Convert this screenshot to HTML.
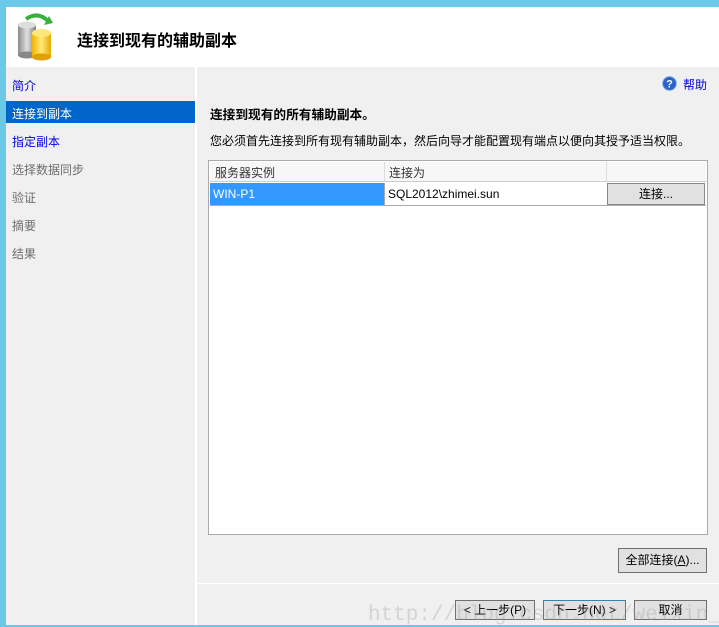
<!DOCTYPE html>
<html><head><meta charset="utf-8"><style>
*{margin:0;padding:0;box-sizing:border-box}
body{width:719px;height:625px;overflow:hidden;background:#6bc8e6;font-family:"Liberation Sans","Noto Sans CJK SC",sans-serif;font-size:12px;position:relative}
.a{position:absolute}
.hdr{left:6px;top:7px;width:713px;height:60px;background:#fff}
.nav{left:6px;top:67px;width:189px;height:558px;background:#f0f0f0}
.sep{left:195px;top:67px;width:2px;height:558px;background:#fff}
.main{left:197px;top:67px;width:522px;height:558px;background:#f0f0f0}
.ni{position:absolute;left:6px;font-size:12px;color:#6d6d6d}
.btn{position:absolute;border:1px solid #707070;background:#e1e1e1;text-align:center;line-height:21px;font-size:12px;color:#000}
</style></head><body>
<div class="a hdr"></div>
<svg class="a" style="left:16px;top:13px" width="44" height="48" viewBox="0 0 44 48">
<defs><linearGradient id="g" x1="0" x2="1"><stop offset="0" stop-color="#8a8a8a"/><stop offset=".5" stop-color="#e0e0e0"/><stop offset="1" stop-color="#7a7a7a"/></linearGradient>
<linearGradient id="y" x1="0" x2="1"><stop offset="0" stop-color="#f2b400"/><stop offset=".5" stop-color="#ffe97a"/><stop offset="1" stop-color="#e8a800"/></linearGradient></defs>
<path d="M10 6 Q22 -2 32 8" stroke="#3bb13b" stroke-width="4" fill="none"/><path d="M28 12 L37 10 L33 3Z" fill="#3bb13b"/>
<rect x="2" y="12" width="18" height="30" fill="url(#g)"/><ellipse cx="11" cy="12" rx="9" ry="3.5" fill="#ddd"/><ellipse cx="11" cy="42" rx="9" ry="3.5" fill="#888"/>
<rect x="16" y="20" width="19" height="24" fill="url(#y)"/><ellipse cx="25.5" cy="20" rx="9.5" ry="4" fill="#ffe67a"/><ellipse cx="25.5" cy="44" rx="9.5" ry="3.5" fill="#e0a000"/>
</svg>
<div class="a" style="left:77px;top:27px;font-size:16px;font-weight:bold;color:#000">连接到现有的辅助副本</div>
<div class="a nav"></div><div class="a sep"></div><div class="a main"></div>
<div class="a" style="left:6px;top:101px;width:189px;height:22px;background:#0066cc"></div>
<div class="a" style="left:0;top:0;width:200px">
<div class="ni" style="top:77px;left:12px;color:#0000e0">简介</div>
<div class="ni" style="top:105px;left:12px;color:#fff">连接到副本</div>
<div class="ni" style="top:133px;left:12px;color:#0000e0">指定副本</div>
<div class="ni" style="top:161px;left:12px">选择数据同步</div>
<div class="ni" style="top:189px;left:12px">验证</div>
<div class="ni" style="top:217px;left:12px">摘要</div>
<div class="ni" style="top:245px;left:12px">结果</div>
</div>
<svg class="a" style="left:662px;top:76px" width="15" height="15" viewBox="0 0 15 15"><circle cx="7.5" cy="7.5" r="7" fill="#2a64c8" stroke="#9bb8e8"/><text x="7.5" y="11.5" font-size="11" font-weight="bold" fill="#fff" text-anchor="middle" font-family="Liberation Sans">?</text></svg>
<div class="a" style="left:683px;top:76px;color:#0000e0">帮助</div>
<div class="a" style="left:210px;top:104px;font-weight:bold;font-size:12.7px">连接到现有的所有辅助副本。</div>
<div class="a" style="left:210px;top:132px;font-size:12px;color:#000">您必须首先连接到所有现有辅助副本，然后向导才能配置现有端点以便向其授予适当权限。</div>
<div class="a" style="left:208px;top:160px;width:500px;height:375px;background:#fff;border:1px solid #aaa"></div>
<div class="a" style="left:210px;top:162px;width:496px;height:20px;background:#f7f7f7;border-bottom:1px solid #ccc"></div>
<div class="a" style="left:384px;top:162px;width:1px;height:20px;background:#ddd"></div>
<div class="a" style="left:606px;top:162px;width:1px;height:20px;background:#ddd"></div>
<div class="a" style="left:215px;top:164px;color:#333">服务器实例</div>
<div class="a" style="left:389px;top:164px;color:#333">连接为</div>
<div class="a" style="left:210px;top:183px;width:174px;height:22px;background:#3399ff"></div>
<div class="a" style="left:384px;top:183px;width:1px;height:23px;background:#aaa"></div>
<div class="a" style="left:210px;top:205px;width:496px;height:1px;background:#aaa"></div>
<div class="a" style="left:213px;top:187px;color:#fff">WIN-P1</div>
<div class="a" style="left:388px;top:187px;color:#000">SQL2012\zhimei.sun</div>
<div class="btn" style="left:607px;top:183px;width:98px;height:22px;border-color:#888">连接...</div>
<div class="btn" style="left:618px;top:548px;width:89px;height:25px;line-height:23px">全部连接(<u>A</u>)...</div>
<div class="a" style="left:197px;top:583px;width:522px;height:1px;background:#fff"></div>
<div class="btn" style="left:455px;top:600px;width:80px;height:20px;line-height:18px">&lt; 上一步(P)</div>
<div class="btn" style="left:543px;top:600px;width:83px;height:20px;line-height:18px;border-color:#3c7fb1">下一步(N) &gt;</div>
<div class="btn" style="left:634px;top:600px;width:73px;height:20px;line-height:18px">取消</div>
<div class="a" style="left:368px;top:604px;font-size:21px;color:rgba(150,150,150,.3);font-family:'Liberation Mono',monospace;white-space:nowrap">http://blog.csdn.net/weixin_3835722</div>
</body></html>
